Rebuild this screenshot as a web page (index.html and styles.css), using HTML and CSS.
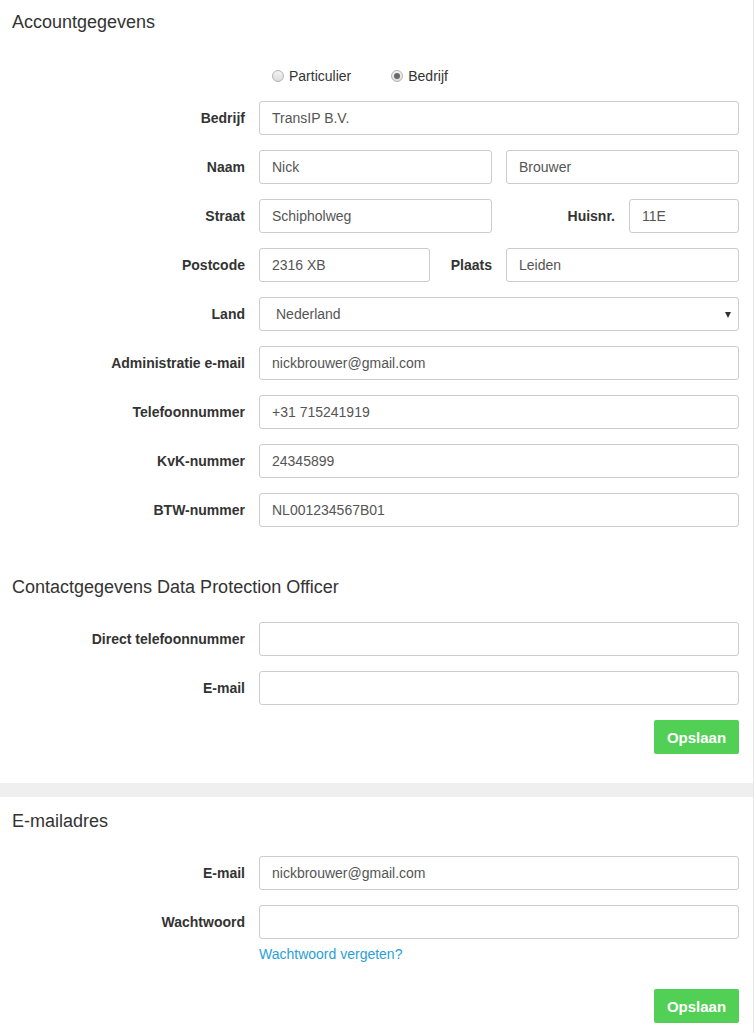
FILE: index.html
```html
<!DOCTYPE html>
<html lang="nl">
<head>
<meta charset="utf-8">
<title>Account</title>
<link rel="stylesheet" href="styles.css">
</head>
<body>
<div class="page">
  <section class="panel panel-first">
    <h2 class="title">Accountgegevens</h2>
    <div class="form form-first">
      <div class="row radio-row">
        <span></span>
        <div class="radios">
          <label class="radio"><span class="dot"></span>Particulier</label>
          <label class="radio"><span class="dot checked"></span>Bedrijf</label>
        </div>
      </div>
      <div class="row">
        <label class="lbl">Bedrijf</label>
        <input class="field" type="text" value="TransIP B.V.">
      </div>
      <div class="row">
        <label class="lbl">Naam</label>
        <div class="group">
          <input class="field w233" type="text" value="Nick">
          <input class="field w233" type="text" value="Brouwer">
        </div>
      </div>
      <div class="row">
        <label class="lbl">Straat</label>
        <div class="group">
          <input class="field w233" type="text" value="Schipholweg">
          <label class="lbl inner">Huisnr.</label>
          <input class="field w110" type="text" value="11E">
        </div>
      </div>
      <div class="row">
        <label class="lbl">Postcode</label>
        <div class="group">
          <input class="field w171" type="text" value="2316 XB">
          <label class="lbl inner">Plaats</label>
          <input class="field w233" type="text" value="Leiden">
        </div>
      </div>
      <div class="row">
        <label class="lbl">Land</label>
        <div class="select-wrap">
          <select class="field select">
            <option>Nederland</option>
          </select>
        </div>
      </div>
      <div class="row">
        <label class="lbl">Administratie e-mail</label>
        <input class="field" type="text" value="nickbrouwer@gmail.com">
      </div>
      <div class="row">
        <label class="lbl">Telefoonnummer</label>
        <input class="field" type="text" value="+31 715241919">
      </div>
      <div class="row">
        <label class="lbl">KvK-nummer</label>
        <input class="field" type="text" value="24345899">
      </div>
      <div class="row">
        <label class="lbl">BTW-nummer</label>
        <input class="field" type="text" value="NL001234567B01">
      </div>
    </div>

    <h2 class="title title-second">Contactgegevens Data Protection Officer</h2>
    <div class="form">
      <div class="row">
        <label class="lbl">Direct telefoonnummer</label>
        <input class="field" type="text" value="">
      </div>
      <div class="row">
        <label class="lbl">E-mail</label>
        <input class="field" type="text" value="">
      </div>
      <div class="actions">
        <button class="btn" type="button">Opslaan</button>
      </div>
    </div>
  </section>

  <div class="divider"></div>

  <section class="panel panel-last">
    <h2 class="title">E-mailadres</h2>
    <div class="form">
      <div class="row">
        <label class="lbl">E-mail</label>
        <input class="field" type="text" value="nickbrouwer@gmail.com">
      </div>
      <div class="row">
        <label class="lbl">Wachtwoord</label>
        <input class="field" type="password" value="">
      </div>
      <div class="row link-row">
        <span></span>
        <a class="link" href="#">Wachtwoord vergeten?</a>
      </div>
      <div class="actions actions-last">
        <button class="btn" type="button">Opslaan</button>
      </div>
    </div>
  </section>
</div>
</body>
</html>
```

FILE: styles.css
```css
* { box-sizing: border-box; }

html, body {
  margin: 0;
  padding: 0;
  background: #fff;
}

body {
  font-family: "Liberation Sans", Arial, sans-serif;
  font-size: 14px;
  color: #333;
}

.page {
  width: 754px;
  border-right: 1px solid #e6e6e6;
  min-height: 1033px;
}

.panel {
  padding: 12px 14px 29px 12px;
}

.panel-last {
  padding-top: 14px;
  padding-bottom: 20px;
}

.divider {
  height: 14px;
  background: #efefef;
}

.title {
  margin: 0;
  font-size: 18px;
  line-height: 20px;
  font-weight: normal;
  color: #333;
}

.title-second {
  margin-top: 50px;
}

.form {
  margin-top: 25px;
  display: flex;
  flex-direction: column;
  gap: 15px;
}

.form-first {
  margin-top: 34px;
}

.row {
  display: grid;
  grid-template-columns: 233px 480px;
  column-gap: 14px;
  align-items: center;
}

.lbl {
  font-weight: bold;
  font-size: 14px;
  text-align: right;
  color: #333;
  white-space: nowrap;
}

.lbl.inner {
  flex: 1;
}

.group {
  display: flex;
  align-items: center;
  gap: 14px;
}

.field {
  display: block;
  width: 100%;
  height: 34px;
  padding: 0 12px;
  border: 1px solid #ccc;
  border-radius: 3px;
  background: #fff;
  font-family: "Liberation Sans", Arial, sans-serif;
  font-size: 14px;
  color: #555;
  outline: none;
}

.w233 { width: 233px; flex: none; }
.w171 { width: 171px; flex: none; }
.w110 { width: 110px; flex: none; }

.select-wrap {
  position: relative;
}

.select {
  appearance: none;
  -webkit-appearance: none;
  padding-left: 16px;
}

.select-wrap::after {
  content: "";
  position: absolute;
  right: 8px;
  top: 15px;
  border-left: 3px solid transparent;
  border-right: 3px solid transparent;
  border-top: 6px solid #333;
}

.radio-row {
  height: 20px;
}

.radios {
  display: flex;
  align-items: center;
  gap: 40px;
  padding-left: 13px;
}

.radio {
  display: flex;
  align-items: center;
  gap: 5px;
  font-size: 14px;
  color: #333;
  line-height: 20px;
}

.dot {
  width: 12px;
  height: 12px;
  border-radius: 50%;
  border: 1px solid #b4b4b4;
  background: linear-gradient(#f4f4f4, #dcdcdc);
  position: relative;
}

.dot.checked::after {
  content: "";
  position: absolute;
  left: 2px;
  top: 2px;
  width: 6px;
  height: 6px;
  border-radius: 50%;
  background: #6a6a6a;
}

.actions {
  display: flex;
  justify-content: flex-end;
}

.btn {
  height: 34px;
  width: 85px;
  border: none;
  border-radius: 2px;
  background: #51d055;
  color: #fff;
  font-family: "Liberation Sans", Arial, sans-serif;
  font-weight: bold;
  font-size: 15px;
  padding: 0;
}

.link-row {
  margin-top: -8px;
  line-height: 16px;
}

.link {
  color: #2a9fd6;
  text-decoration: none;
  font-size: 14px;
}

.actions-last {
  margin-top: 12px;
}
```
